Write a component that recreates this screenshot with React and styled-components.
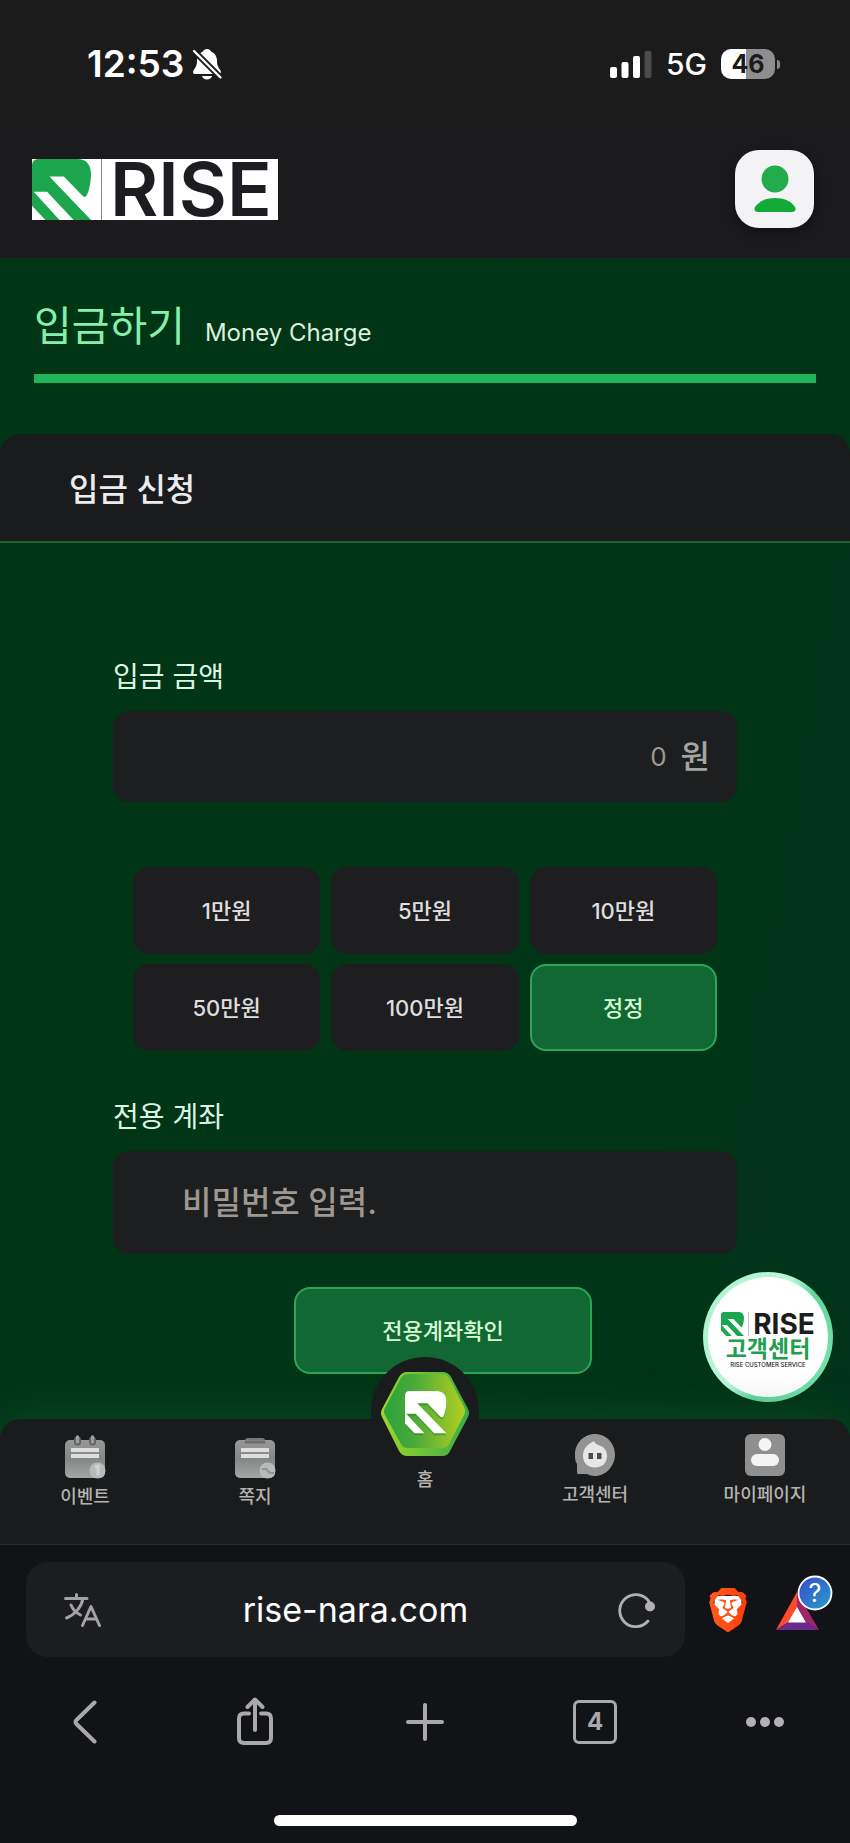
import React, { useState } from 'react';
import styled, { createGlobalStyle, css } from 'styled-components';
import { SiBrave } from 'react-icons/si';

const GlobalStyle = createGlobalStyle`
	* {
		box-sizing: border-box;
	}
	body {
		margin: 0;
		background: #121316;
		font-family: Inter, "Noto Sans CJK KR", sans-serif;
	}
	button, input {
		font-family: inherit;
		margin: 0;
		padding: 0;
		border: 0;
		background: none;
	}
	button {
		cursor: pointer;
	}
	svg {
		display: block;
		flex-shrink: 0;
	}
`;

const Page = styled.div`
	display: flex;
	flex-direction: column;
	background: linear-gradient(100deg, #003616 0%, #003517 70%, #023219 100%);
`;

/* status bar */
const StatusBar = styled.div`
	display: flex;
	justify-content: space-between;
	align-items: center;
	height: 128px;
	padding: 0 70px 0 87px;
	background: #1b1b1b;
	color: #fff;
`;
const StatusGroup = styled.div`
	display: flex;
	align-items: center;
	gap: ${(p) => p.$gap}px;
`;
const Clock = styled.time`
	font-size: 37px;
	font-weight: 600;
	line-height: 40px;
`;
const Network = styled.span`
	font-size: 30px;
	font-weight: 500;
	line-height: 40px;
`;
const Battery = styled.div`
	display: flex;
	align-items: center;
	gap: 2px;
	&::after {
		content: '';
		width: 3px;
		height: 9px;
		border-radius: 0 5px 5px 0;
		background: #8a8a8a;
	}
`;
const BatteryLevel = styled.span`
	width: 54px;
	height: 30px;
	border-radius: 10px;
	background: linear-gradient(90deg, #fff 47%, #8e8e8e 47%);
	color: #1b1b1b;
	font-size: 25px;
	font-weight: 700;
	line-height: 31px;
	text-align: center;
`;

/* site header */
const Header = styled.header`
	display: flex;
	justify-content: space-between;
	align-items: center;
	padding: 22px 36px 30px 32px;
	background: #1b1a1c;
`;
const LogoLink = styled.a`
	display: flex;
	align-items: center;
	width: 246px;
	height: 61px;
	background: #fff;
	color: #1d1c20;
	text-decoration: none;
`;
const LogoDivider = styled.span`
	align-self: stretch;
	width: 1px;
	margin: 0 8px 0 10px;
	background: #8a8a8a;
`;
const LogoText = styled.span`
	font-size: 74px;
	font-weight: 600;
	line-height: 61px;
`;
const UserButton = styled.button`
	display: flex;
	justify-content: center;
	align-items: center;
	width: 79px;
	height: 78px;
	border-radius: 24px;
	background: #f3f3f5;
	box-shadow: 0 4px 12px rgba(0, 0, 0, 0.4);
`;

/* page content */
const Main = styled.main`
	position: relative;
	padding: 38px 0 45px;
`;
const TitleBar = styled.div`
	display: flex;
	align-items: baseline;
	gap: 20px;
	margin: 0 34px 51px;
	padding-bottom: 18px;
	border-bottom: 9px solid #22b45a;
`;
const Title = styled.h1`
	margin: 0;
	color: #86efac;
	font-size: 41px;
	font-weight: 400;
	line-height: 60px;
`;
const SubTitle = styled.span`
	color: #dcefdc;
	font-size: 24px;
	font-weight: 400;
`;
const SectionTitle = styled.h2`
	margin: 0 0 114px;
	padding: 31px 69px 26px;
	border-bottom: 2px solid #1d6338;
	border-radius: 20px 20px 0 0;
	background: #1a1b1d;
	color: #ececee;
	font-size: 32px;
	font-weight: 500;
	line-height: 50px;
`;
const Form = styled.form`
	padding: 0 113px;
`;
const Label = styled.label`
	display: block;
	margin-bottom: 14px;
	color: #dcf5e2;
	font-size: 28px;
	font-weight: 400;
	line-height: 40px;
`;
const Field = styled.div`
	display: flex;
	align-items: center;
	gap: 14px;
	height: ${(p) => p.$height}px;
	padding: ${(p) => p.$pad};
	border-radius: 16px;
	background: #1d1e1f;
	color: #a5a5a3;
	font-size: 32px;
	font-weight: 500;
	line-height: 48px;
`;
const TextInput = styled.input`
	flex: 1;
	min-width: 0;
	outline: none;
	color: #e5e5e5;
	font-size: ${(p) => (p.$amount ? 26 : 32)}px;
	font-weight: ${(p) => (p.$amount ? 400 : 500)};
	text-align: ${(p) => (p.$amount ? 'right' : 'left')};
	&::placeholder {
		color: #9d9892;
		opacity: 1;
	}
`;
const AmountGrid = styled.div`
	display: grid;
	grid-template-columns: repeat(3, 1fr);
	gap: 10px 11px;
	padding: 65px 20px 46px;
`;
const greenButton = css`
	border: 2px solid #2aa656;
	background: #126832;
	color: #d6f8d4;
`;
const FormButton = styled.button`
	height: 87px;
	padding-bottom: 3px;
	border-radius: 16px;
	background: #1e1d1f;
	color: #dededf;
	font-size: 22px;
	font-weight: 500;
	${(p) => p.$primary && greenButton}
`;
const CheckButton = styled(FormButton)`
	width: 298px;
`;
const CheckRow = styled.div`
	display: flex;
	justify-content: center;
	padding: 33px 0 0 36px;
`;

/* floating support badge */
const Support = styled.a`
	position: absolute;
	right: 17px;
	bottom: 17px;
	display: flex;
	flex-direction: column;
	align-items: center;
	justify-content: center;
	width: 130px;
	height: 130px;
	padding-top: 6px;
	border: 5px solid transparent;
	border-radius: 50%;
	background: radial-gradient(circle, #fff 70%, #e9fff3 100%) padding-box,
		linear-gradient(120deg, #a9f2cc 0%, #b9f6d8 45%, #5fd79b 60%, #7fe3b1 100%) border-box;
	color: #1d1c20;
	text-decoration: none;
`;
const SupportBrand = styled.span`
	display: flex;
	align-items: center;
	gap: 4px;
	font-size: 28px;
	font-weight: 700;
	line-height: 26px;
`;
const SupportDivider = styled.span`
	width: 1px;
	height: 24px;
	background: #c9c9c9;
`;
const SupportName = styled.span`
	color: #1ea04e;
	font-size: 23px;
	font-weight: 700;
	line-height: 24px;
`;
const SupportNote = styled.span`
	font-size: 6px;
	font-weight: 500;
	line-height: 8px;
`;

/* site bottom navigation */
const Nav = styled.nav`
	position: relative;
	display: grid;
	grid-template-columns: repeat(5, 1fr);
	height: 126px;
	border-bottom: 1px solid #2b2b2d;
	border-radius: 20px 20px 0 0;
	background: #1a1b1c;
	box-shadow: 0 -6px 40px rgba(30, 110, 55, 0.3);
`;
const NavLink = styled.a`
	display: flex;
	flex-direction: column;
	align-items: center;
	gap: 6px;
	padding-top: 14px;
	color: #b3b3b1;
	font-size: 18px;
	font-weight: 500;
	line-height: 24px;
	text-decoration: none;
`;
const HomeLink = styled(NavLink)`
	gap: 3px;
	margin-top: -62px;
	padding-top: 0;
`;
const HomeCircle = styled.span`
	display: flex;
	justify-content: center;
	align-items: center;
	width: 108px;
	height: 108px;
	padding-top: 5px;
	border-radius: 50%;
	background: #1a1b1c;
`;

/* browser chrome, painted over the glow of the nav */
const Browser = styled.footer`
	position: relative;
	padding-bottom: 17px;
	background: #121316;
`;
const AddressRow = styled.div`
	display: flex;
	align-items: center;
	padding: 17px 17px 0 26px;
`;
const AddressBar = styled.div`
	display: flex;
	align-items: center;
	flex: 1;
	min-width: 0;
	height: 95px;
	margin-right: 24px;
	border-radius: 22px;
	background: #1c1d20;
`;
const AddressButton = styled.button`
	display: flex;
	justify-content: ${(p) => (p.$end ? 'flex-end' : 'flex-start')};
	width: 100px;
	padding: ${(p) => (p.$end ? '0 28px 0 0' : '0 0 0 38px')};
`;
const AddressInput = styled.input`
	flex: 1;
	min-width: 0;
	outline: none;
	color: #fff;
	font-size: 34px;
	text-align: center;
`;
const IconButton = styled.button`
	display: flex;
	justify-content: center;
	align-items: center;
`;
const RewardsButton = styled(IconButton)`
	margin-left: 28px;
`;
const Toolbar = styled.div`
	display: grid;
	grid-template-columns: repeat(5, 1fr);
	height: 130px;
`;
const TabCount = styled.span`
	width: 44px;
	height: 44px;
	border: 3px solid #a9a9ad;
	border-radius: 6px;
	color: #a9a9ad;
	font-size: 24px;
	font-weight: 700;
	line-height: 38px;
`;
const HomeIndicator = styled.div`
	width: 303px;
	height: 11px;
	margin: 28px auto 0;
	border-radius: 6px;
	background: #fff;
`;

const Mark = ({ width, height, fill = '#1ba54c' }) => (
	<svg width={ width } height={ height } viewBox="0 0 176 180" preserveAspectRatio="none" aria-hidden="true">
		<path fill={ fill } d="M0 20Q0 0 20 0H138Q176 2 176 48Q174 88 163 108Q158 116 150 108L95 52H52L176 180H124L45 97H5L82 180H40L0 138Z"/>
	</svg>
);

const BellOffIcon = () => (
	<svg width="30" height="32" viewBox="0 0 30 32" aria-hidden="true">
		<path fill="#fff" d="M15 1C17 1 18.500 2 19 3.500C23 5 25 9 25 13C25 18 27 20 28.500 22.500C29.500 24.500 28.500 26 27 26H3C1 26 .5 24.500 1.500 22.500C3 20 5 18 5 13C5 9 7 5 11 3.500C11.500 2 13 1 15 1ZM10 28H20C19.500 30 17.500 31.500 15 31.500C12.500 31.500 10.500 30 10 28Z"/>
		<path stroke="#1b1b1b" strokeWidth="6" d="M0 1L30 31"/>
		<path stroke="#fff" strokeWidth="2.400" strokeLinecap="round" d="M2 3L28.500 29.500"/>
	</svg>
);

const SignalIcon = () => (
	<svg width="42" height="27" viewBox="0 0 42 27" fill="#fff" aria-hidden="true">
		<rect x="0" y="16" width="7" height="11" rx="2"/>
		<rect x="11.500" y="11" width="7" height="16" rx="2"/>
		<rect x="23" y="5" width="7" height="22" rx="2"/>
		<rect x="34.500" y="0" width="7" height="27" rx="2" fill="#4b4b4b"/>
	</svg>
);

const UserIcon = () => (
	<svg width="42" height="48" viewBox="0 0 42 48" aria-hidden="true">
		<circle cx="21" cy="14" r="13.500" fill="#22ac4b"/>
		<path fill="#13ab37" d="M4 47C1 47 -.5 44.500 1 42C5 36 12 33 21 33C30 33 37 36 41 42C42.500 44.500 41 47 38 47Z"/>
	</svg>
);

const EventIcon = () => (
	<svg width="42" height="46" viewBox="0 0 42 46" aria-hidden="true">
		<defs>
			<linearGradient id="sheet" x1="0" y1="0" x2="0" y2="1">
				<stop offset="0" stopColor="#979999"/>
				<stop offset=".5" stopColor="#858787"/>
				<stop offset="1" stopColor="#a4a6a6"/>
			</linearGradient>
		</defs>
		<rect x="1" y="7" width="40" height="38" rx="5" fill="url(#sheet)"/>
		<path stroke="#5f6161" strokeWidth="7" strokeLinecap="round" d="M13.500 7V9M28.500 7V9"/>
		<path stroke="#9b9d9d" strokeWidth="3.500" strokeLinecap="round" d="M13.500 4V9M28.500 4V9"/>
		<path stroke="#dedfdb" strokeWidth="4" d="M7 17H35M7 23H35"/>
		<circle cx="33.500" cy="37.500" r="8" fill="#b9bbba"/>
		<path stroke="#d2d4d3" strokeWidth="3" fill="none" d="M31 34L34 33V42"/>
	</svg>
);

const NoteIcon = () => (
	<svg width="42" height="46" viewBox="0 0 42 46" aria-hidden="true">
		<path fill="#777979" d="M8 9L13 5H29L34 9Z"/>
		<rect x="1" y="7" width="40" height="38" rx="5" fill="url(#sheet)"/>
		<path stroke="#6c6e6e" strokeWidth="3" strokeLinecap="round" d="M12 9H30"/>
		<path stroke="#dedfdb" strokeWidth="4" d="M7 17H35M7 23H35"/>
		<circle cx="33.500" cy="37.500" r="8" fill="#b9bbba"/>
		<path stroke="#929494" strokeWidth="2" fill="none" d="M28 36L32 36L36 40H40"/>
	</svg>
);

const ChatIcon = () => (
	<svg width="42" height="44" viewBox="0 0 42 44" aria-hidden="true">
		<path fill="#939393" d="M21 1C32 1 41 10 41 21.500C41 33 32 43 21 43C18 43 15 42 13 41H4Q3 41 3 39V31C1 28 1 25 1 21.500C1 10 10 1 21 1Z"/>
		<path fill="#e6e6e8" d="M20 8C21 11 24 12 27 13C31 15 33 19 33 23C33 30 28 34.500 21 34.500C14 34.500 9 30 9 23C9 15 14 11 20 8Z"/>
		<path fill="#4b4b4b" d="M14.500 20H19V26H14.500ZM23 20H27.500V26H23Z"/>
	</svg>
);

const MyPageIcon = () => (
	<svg width="42" height="44" viewBox="0 0 42 44" aria-hidden="true">
		<rect x="1" y="1" width="40" height="42" rx="6" fill="#8f8f90"/>
		<circle cx="21" cy="11.500" r="6.500" fill="#f4f4f4"/>
		<rect x="7" y="21" width="28" height="12" rx="6" fill="#f4f4f4"/>
	</svg>
);

const HexIcon = () => (
	<svg width="88" height="84" viewBox="0 0 88 84" aria-hidden="true">
		<defs>
			<linearGradient id="hexFace" x1="0" y1="0" x2="1" y2="0">
				<stop offset="0" stopColor="#2ba33c"/>
				<stop offset=".35" stopColor="#46a93a"/>
				<stop offset="1" stopColor="#b3cf22"/>
			</linearGradient>
			<linearGradient id="hexRim" x1="0" y1="0" x2="1" y2="0">
				<stop offset="0" stopColor="#9ed42c"/>
				<stop offset="1" stopColor="#3aad45"/>
			</linearGradient>
		</defs>
		<path fill="url(#hexRim)" d="M26 0H62Q67 0 70 5L87 37Q89 41 87 45L69 79Q67 84 61 84H26Q21 84 18 79L1 45Q-1 41 1 37L18 5Q21 0 26 0Z"/>
		<path fill="url(#hexFace)" d="M27 2H61Q65 2 68 6L83 35Q85 39 83 43L68 72Q66 76 61 76H27Q22 76 20 72L4 43Q2 39 4 36L20 6Q23 2 27 2Z"/>
		<g transform="translate(24 21) scale(.235)" fill="#2f7d25" opacity=".5">
			<path d="M0 20Q0 0 20 0H138Q176 2 176 48Q174 88 163 108Q158 116 150 108L95 52H52L176 180H124L45 97H5L82 180H40L0 138Z"/>
		</g>
		<g transform="translate(24 19) scale(.235)" fill="#fff">
			<path d="M0 20Q0 0 20 0H138Q176 2 176 48Q174 88 163 108Q158 116 150 108L95 52H52L176 180H124L45 97H5L82 180H40L0 138Z"/>
		</g>
	</svg>
);

const TranslateIcon = () => (
	<svg width="38" height="34" viewBox="0 0 38 34" fill="none" stroke="#a3a3a6" strokeWidth="3" strokeLinecap="round" strokeLinejoin="round" aria-hidden="true">
		<path d="M1.500 5.500H23M12.500 1.500V5.500M19 5.500C17.500 14 11 21.500 2.500 25M7 12C9 17 12.500 20 16.500 22"/>
		<path d="M18.500 32.500L27 13.500L35.500 32.500M21.500 26H32.500"/>
	</svg>
);

const ReloadIcon = () => (
	<svg width="40" height="36" viewBox="0 0 40 36" aria-hidden="true">
		<path fill="none" stroke="#b0b0b3" strokeWidth="2.800" strokeLinecap="round" d="M31 29A16 16 0 1 1 32.500 10.500"/>
		<circle cx="33" cy="14.500" r="5" fill="#b0b0b3"/>
	</svg>
);

const BraveIcon = () => (
	<svg width="38" height="44" viewBox="0 0 38 44" aria-hidden="true">
		<defs>
			<linearGradient id="brave" x1="0" y1="0" x2="1" y2="0">
				<stop offset="0" stopColor="#ff5a1c"/>
				<stop offset="1" stopColor="#ff3d0c"/>
			</linearGradient>
		</defs>
		<path fill="#fff" d="M6 8H32L33 20L29 32L19 39L9 32L5 20Z"/>
		<SiBrave x="-3" y="0" size={ 44 } fill="url(#brave)"/>
	</svg>
);

const RewardsIcon = () => (
	<svg width="58" height="72" viewBox="0 -9 58 72" aria-hidden="true">
		<defs>
			<linearGradient id="help" x1="0" y1="0" x2="1" y2="1">
				<stop offset="0" stopColor="#3c46cf"/>
				<stop offset="1" stopColor="#22a3c4"/>
			</linearGradient>
		</defs>
		<path fill="#ff4a2c" d="M22 9V25L14 39L1 47Z"/>
		<path fill="#a3246b" d="M22 9L44 47L31 39L22 25Z"/>
		<path fill="#6a2b90" d="M1 47L14 39H31L44 47Z"/>
		<path fill="#fff" d="M22 24L31 39.500H13Z"/>
		<circle cx="40" cy="10" r="16.500" fill="url(#help)" stroke="#fff" strokeWidth="1.800"/>
		<text x="40" y="19" fill="#fff" fontSize="25" textAnchor="middle">?</text>
	</svg>
);

const lineIcon = {
	fill : 'none',
	stroke : '#a9a9ad',
	strokeWidth : 4,
	strokeLinecap : 'round',
	strokeLinejoin : 'round',
	'aria-hidden' : true,
};

const BackIcon = () => (
	<svg width="24" height="44" viewBox="0 0 24 44" { ...lineIcon }>
		<path d="M21.500 2.500L3.500 20Q1.500 22 3.500 24L21.500 41.500"/>
	</svg>
);

const ShareIcon = () => (
	<svg width="38" height="50" viewBox="0 0 38 50" { ...lineIcon }>
		<path d="M13 16.500H8Q3 16.500 3 21.500V41Q3 46 8 46H30Q35 46 35 41V21.500Q35 16.500 30 16.500H25M19 33V3M11.500 10L19 2.500L26.500 10"/>
	</svg>
);

const PlusIcon = () => (
	<svg width="40" height="40" viewBox="0 0 40 40" { ...lineIcon }>
		<path d="M20 3V37M3 20H37"/>
	</svg>
);

const MoreIcon = () => (
	<svg width="40" height="12" viewBox="0 0 40 12" fill="#b4b0b8" aria-hidden="true">
		<circle cx="6" cy="6" r="5"/>
		<circle cx="20" cy="6" r="5"/>
		<circle cx="34" cy="6" r="5"/>
	</svg>
);

const amounts = [
	{ label : '1만원', value : 10000 },
	{ label : '5만원', value : 50000 },
	{ label : '10만원', value : 100000 },
	{ label : '50만원', value : 500000 },
	{ label : '100만원', value : 1000000 },
];

const DepositForm = () => {
	const [amount, setAmount] = useState (0);
	const [password, setPassword] = useState ('');
	return (
		<Form onSubmit={ (e) => e.preventDefault () }>
			<Label htmlFor="amount">입금 금액</Label>
			<Field $height={ 91 } $pad="0 27px 0 40px">
				<TextInput $amount
				           id="amount"
				           inputMode="numeric"
				           placeholder="0"
				           value={ amount || '' }
				           onChange={ (e) => setAmount (Number (e.target.value.replace (/\D/g, ''))) }/>
				<span>원</span>
			</Field>
			<AmountGrid>
				{ amounts.map ((item) => (
					<FormButton type="button" key={ item.value } onClick={ () => setAmount (amount + item.value) }>
						{ item.label }
					</FormButton>
				)) }
				<FormButton type="button" $primary onClick={ () => setAmount (0) }>정정</FormButton>
			</AmountGrid>
			<Label htmlFor="password">전용 계좌</Label>
			<Field $height={ 103 } $pad="0 40px 0 69px">
				<TextInput id="password"
				           type="password"
				           placeholder="비밀번호 입력."
				           value={ password }
				           onChange={ (e) => setPassword (e.target.value) }/>
			</Field>
			<CheckRow>
				<CheckButton type="submit" $primary>전용계좌확인</CheckButton>
			</CheckRow>
		</Form>
	);
};

const App = () => (
	<Page>
		<GlobalStyle/>
		<StatusBar>
			<StatusGroup $gap={ 8 }>
				<Clock>12:53</Clock>
				<BellOffIcon/>
			</StatusGroup>
			<StatusGroup $gap={ 14 }>
				<SignalIcon/>
				<Network>5G</Network>
				<Battery><BatteryLevel>46</BatteryLevel></Battery>
			</StatusGroup>
		</StatusBar>
		<Header>
			<LogoLink href="#home">
				<Mark width={ 59 } height={ 61 }/>
				<LogoDivider/>
				<LogoText>RISE</LogoText>
			</LogoLink>
			<UserButton type="button" aria-label="마이페이지">
				<UserIcon/>
			</UserButton>
		</Header>
		<Main>
			<TitleBar>
				<Title>입금하기</Title>
				<SubTitle>Money Charge</SubTitle>
			</TitleBar>
			<SectionTitle>입금 신청</SectionTitle>
			<DepositForm/>
			<Support href="#support">
				<SupportBrand>
					<Mark width={ 23 } height={ 24 }/>
					<SupportDivider/>
					RISE
				</SupportBrand>
				<SupportName>고객센터</SupportName>
				<SupportNote>RISE CUSTOMER SERVICE</SupportNote>
			</Support>
		</Main>
		<Nav>
			<NavLink href="#event"><EventIcon/>이벤트</NavLink>
			<NavLink href="#note"><NoteIcon/>쪽지</NavLink>
			<HomeLink href="#home">
				<HomeCircle><HexIcon/></HomeCircle>
				홈
			</HomeLink>
			<NavLink href="#support"><ChatIcon/>고객센터</NavLink>
			<NavLink href="#mypage"><MyPageIcon/>마이페이지</NavLink>
		</Nav>
		<Browser>
			<AddressRow>
				<AddressBar>
					<AddressButton type="button" aria-label="Translate"><TranslateIcon/></AddressButton>
					<AddressInput aria-label="Address" defaultValue="rise-nara.com"/>
					<AddressButton type="button" $end aria-label="Reload"><ReloadIcon/></AddressButton>
				</AddressBar>
				<IconButton type="button" aria-label="Brave Shields"><BraveIcon/></IconButton>
				<RewardsButton type="button" aria-label="Brave Rewards"><RewardsIcon/></RewardsButton>
			</AddressRow>
			<Toolbar>
				<IconButton type="button" aria-label="Back"><BackIcon/></IconButton>
				<IconButton type="button" aria-label="Share"><ShareIcon/></IconButton>
				<IconButton type="button" aria-label="New tab"><PlusIcon/></IconButton>
				<IconButton type="button" aria-label="Tabs"><TabCount>4</TabCount></IconButton>
				<IconButton type="button" aria-label="More"><MoreIcon/></IconButton>
			</Toolbar>
			<HomeIndicator/>
		</Browser>
	</Page>
);

export default App;
